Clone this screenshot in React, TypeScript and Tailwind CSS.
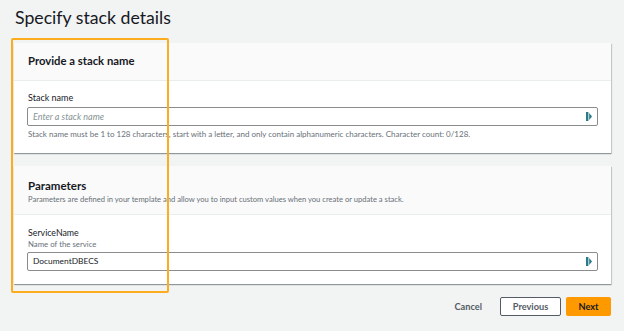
import React from "react";

function FieldIcon() {
  return (
    <svg width="6" height="9" viewBox="0 0 6 9" className="shrink-0">
      <rect x="0" y="0" width="2.4" height="9" fill="#2b7a8a" />
      <path d="M3.2 1 L6 4.5 L3.2 8 Z" fill="#2b7a8a" />
    </svg>
  );
}

function Input({ value, placeholder }: { value?: string; placeholder?: string }) {
  return (
    <div className="h-[19px] border border-[#8c8c8c] rounded-[2px] bg-white flex items-center pl-[5px] pr-[5px]">
      {value ? (
        <span className="flex-1 text-[8.4px] text-[#16191f]">{value}</span>
      ) : (
        <span className="flex-1 text-[9px] italic text-[#879596]">{placeholder}</span>
      )}
      <FieldIcon />
    </div>
  );
}

export default function App() {
  return (
    <div
      className="relative w-[624px] h-[331px] overflow-hidden bg-[#f2f3f3] text-[#16191f]"
      style={{ fontFamily: 'Lato, "Open Sans", sans-serif' }}
    >
      <h1 className="pl-[15px] pt-[6px] h-[43px] text-[17.7px] leading-[24px] font-normal text-[#16191f]">
        Specify stack details
      </h1>

      <div className="ml-[14px] w-[597px] flex flex-col gap-[13px]">
        <section className="bg-white shadow-[0_1px_1px_0_rgba(0,28,36,0.3),1px_1px_1px_0_rgba(0,28,36,0.15)]">
          <div className="h-[38px] bg-[#fafafa] border-b border-[#eaeded] flex items-center px-[14px]">
            <h2 className="text-[11.3px] font-bold">Provide a stack name</h2>
          </div>
          <div className="px-[13px] pt-[11px] pb-[14px]">
            <div className="text-[9px] leading-[12px] mb-[3px] pl-[1px]">Stack name</div>
            <Input placeholder="Enter a stack name" />
            <div className="text-[8px] leading-[10px] mt-[3px] pl-[1px] text-[#687078]">
              Stack name must be 1 to 128 characters, start with a letter, and only contain alphanumeric characters. Character count: 0/128.
            </div>
          </div>
        </section>

        <section className="bg-white shadow-[0_1px_1px_0_rgba(0,28,36,0.3),1px_1px_1px_0_rgba(0,28,36,0.15)]">
          <div className="h-[49px] bg-[#fafafa] border-b border-[#eaeded] flex flex-col justify-center px-[14px] pt-[2px]">
            <h2 className="text-[11.5px] leading-[16px] font-bold">Parameters</h2>
            <p className="text-[7.6px] leading-[11px] text-[#687078]">
              Parameters are defined in your template and allow you to input custom values when you create or update a stack.
            </p>
          </div>
          <div className="px-[13px] pt-[12px] pb-[13px]">
            <div className="text-[8.8px] leading-[12px] pl-[1px]">ServiceName</div>
            <div className="text-[7.8px] leading-[10px] pl-[1px] mb-[3px] text-[#687078]">Name of the service</div>
            <Input value="DocumentDBECS" />
          </div>
        </section>
      </div>

      <div className="mt-[13px] mr-[13px] flex justify-end items-center gap-[5px]">
        <button className="h-[19px] pl-[17px] pr-[13px] text-[9.2px] font-bold text-[#545b64]">Cancel</button>
        <button className="h-[19px] w-[61px] border border-[#545b64] bg-white text-[9.2px] font-bold text-[#545b64] rounded-[2px]">
          Previous
        </button>
        <button className="h-[19px] w-[45px] bg-[#ff9900] text-[9.2px] font-bold text-[#16191f] rounded-[2px]">
          Next
        </button>
      </div>

      <div className="absolute left-[11px] top-[38px] w-[158px] h-[255px] border-2 border-[#fbad1f] rounded-[2px] pointer-events-none" />
    </div>
  );
}
